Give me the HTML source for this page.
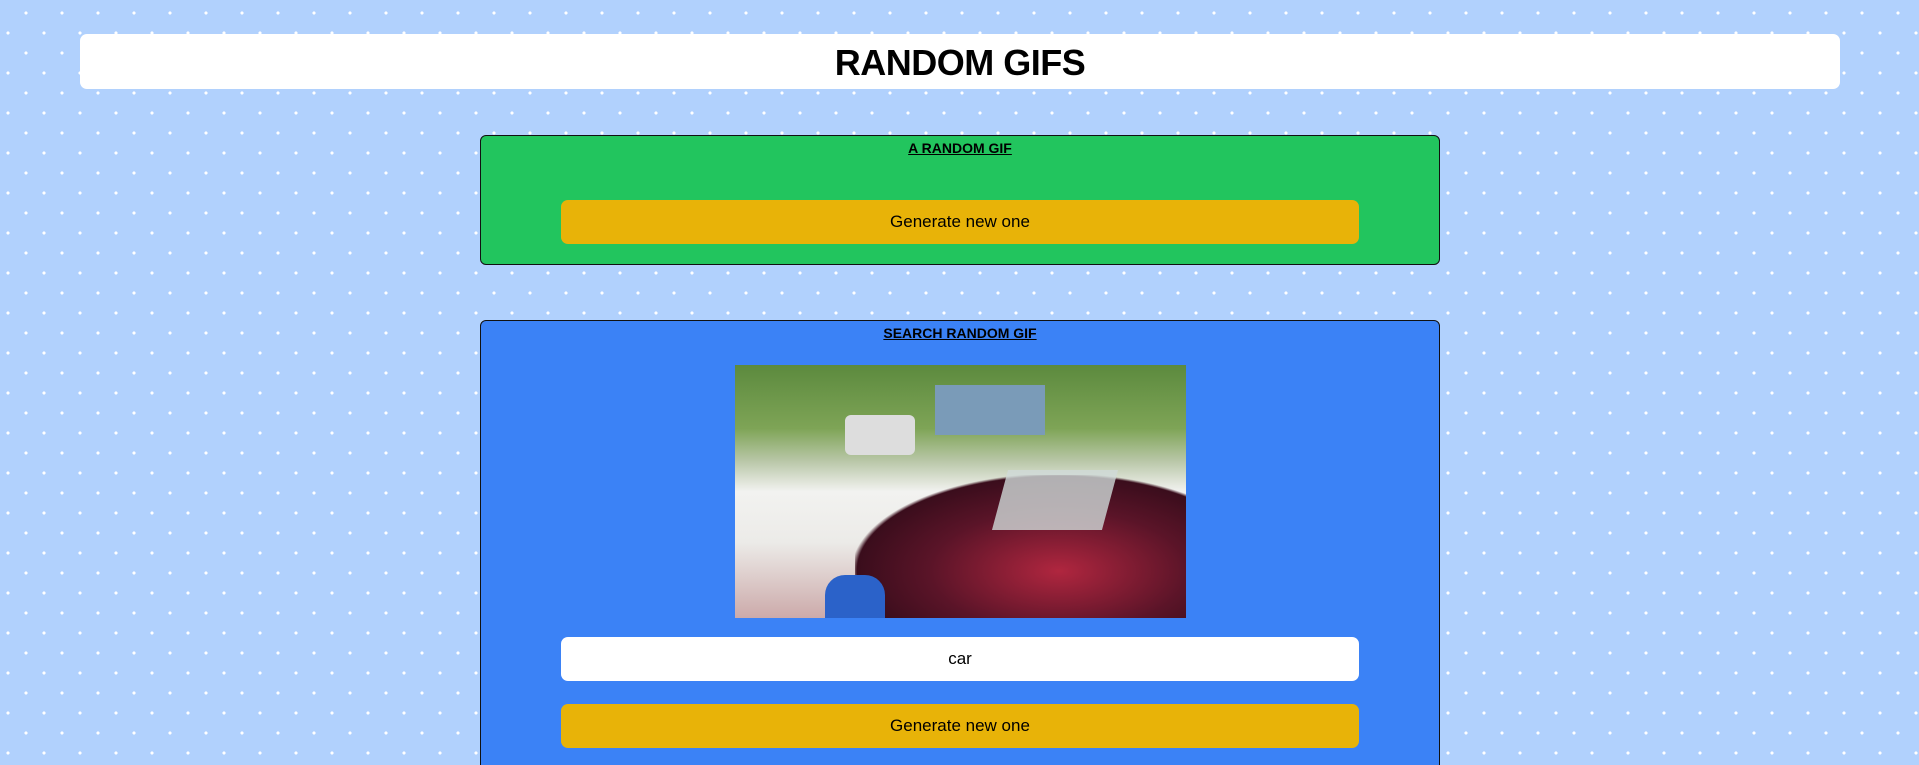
<!DOCTYPE html>
<html><head><style>
html{height:765px;overflow:hidden;}
html,body{margin:0;padding:0;}
body{width:1919px;height:765px;overflow:hidden;font-family:"Liberation Sans",sans-serif;
background-color:#b1d1fd;
background-image:radial-gradient(circle,#fff 1.4px,transparent 1.8px),radial-gradient(circle,#fff 1.4px,transparent 1.8px);
background-size:36px 40px,36px 40px;background-position:8px -7px,26px 13px;position:relative;}
.hdr{position:absolute;left:80px;top:34px;width:1760px;height:55px;background:#fff;border-radius:7px;text-align:center;font-weight:bold;font-size:36px;line-height:58px;letter-spacing:-0.5px;}
.box{position:absolute;left:480px;width:958px;border:1px solid #111;border-radius:6px;}
.green{top:135px;height:128px;background:#22c55e;}
.blue{top:320px;height:455px;background:#3b82f6;}
.t{text-align:center;font-weight:bold;font-size:14px;text-decoration:underline;margin-top:4px;}
.btn{position:absolute;left:80px;width:798px;height:44px;border-radius:7px;background:#e8b308;text-align:center;line-height:44px;font-size:17px;}
.inp{background:#fff;}
.img{position:absolute;left:254px;top:44px;width:451px;height:253px;overflow:hidden;
background:linear-gradient(180deg,#5c8a3e 0%,#7ea456 25%,#b9c7a8 38%,#f2f2f0 50%,#ecebe8 70%,#caa 100%);}
</style></head><body>
<div class="hdr">RANDOM GIFS</div>
<div class="box green"><div class="t">A RANDOM GIF</div><div class="btn" style="top:64px">Generate new one</div></div>
<div class="box blue"><div class="t">SEARCH RANDOM GIF</div>
<div class="img">
<div style="position:absolute;left:110px;top:50px;width:70px;height:40px;background:#ddd;border-radius:6px"></div>
<div style="position:absolute;left:200px;top:20px;width:110px;height:50px;background:#7a9bb8"></div>
<div style="position:absolute;left:120px;top:110px;width:340px;height:160px;background:radial-gradient(ellipse at 60% 60%,#b0263f 0%,#5a1428 45%,#3a0d1c 70%,transparent 72%)"></div>
<div style="position:absolute;left:265px;top:105px;width:110px;height:60px;background:#cfd9d8;transform:skewX(-15deg);opacity:.8"></div>
<div style="position:absolute;left:90px;top:210px;width:60px;height:50px;background:#2b62c9;border-radius:20px 20px 0 0"></div>
</div>
<div class="btn inp" style="top:316px">car</div>
<div class="btn" style="top:383px">Generate new one</div>
</div>
</body></html>
